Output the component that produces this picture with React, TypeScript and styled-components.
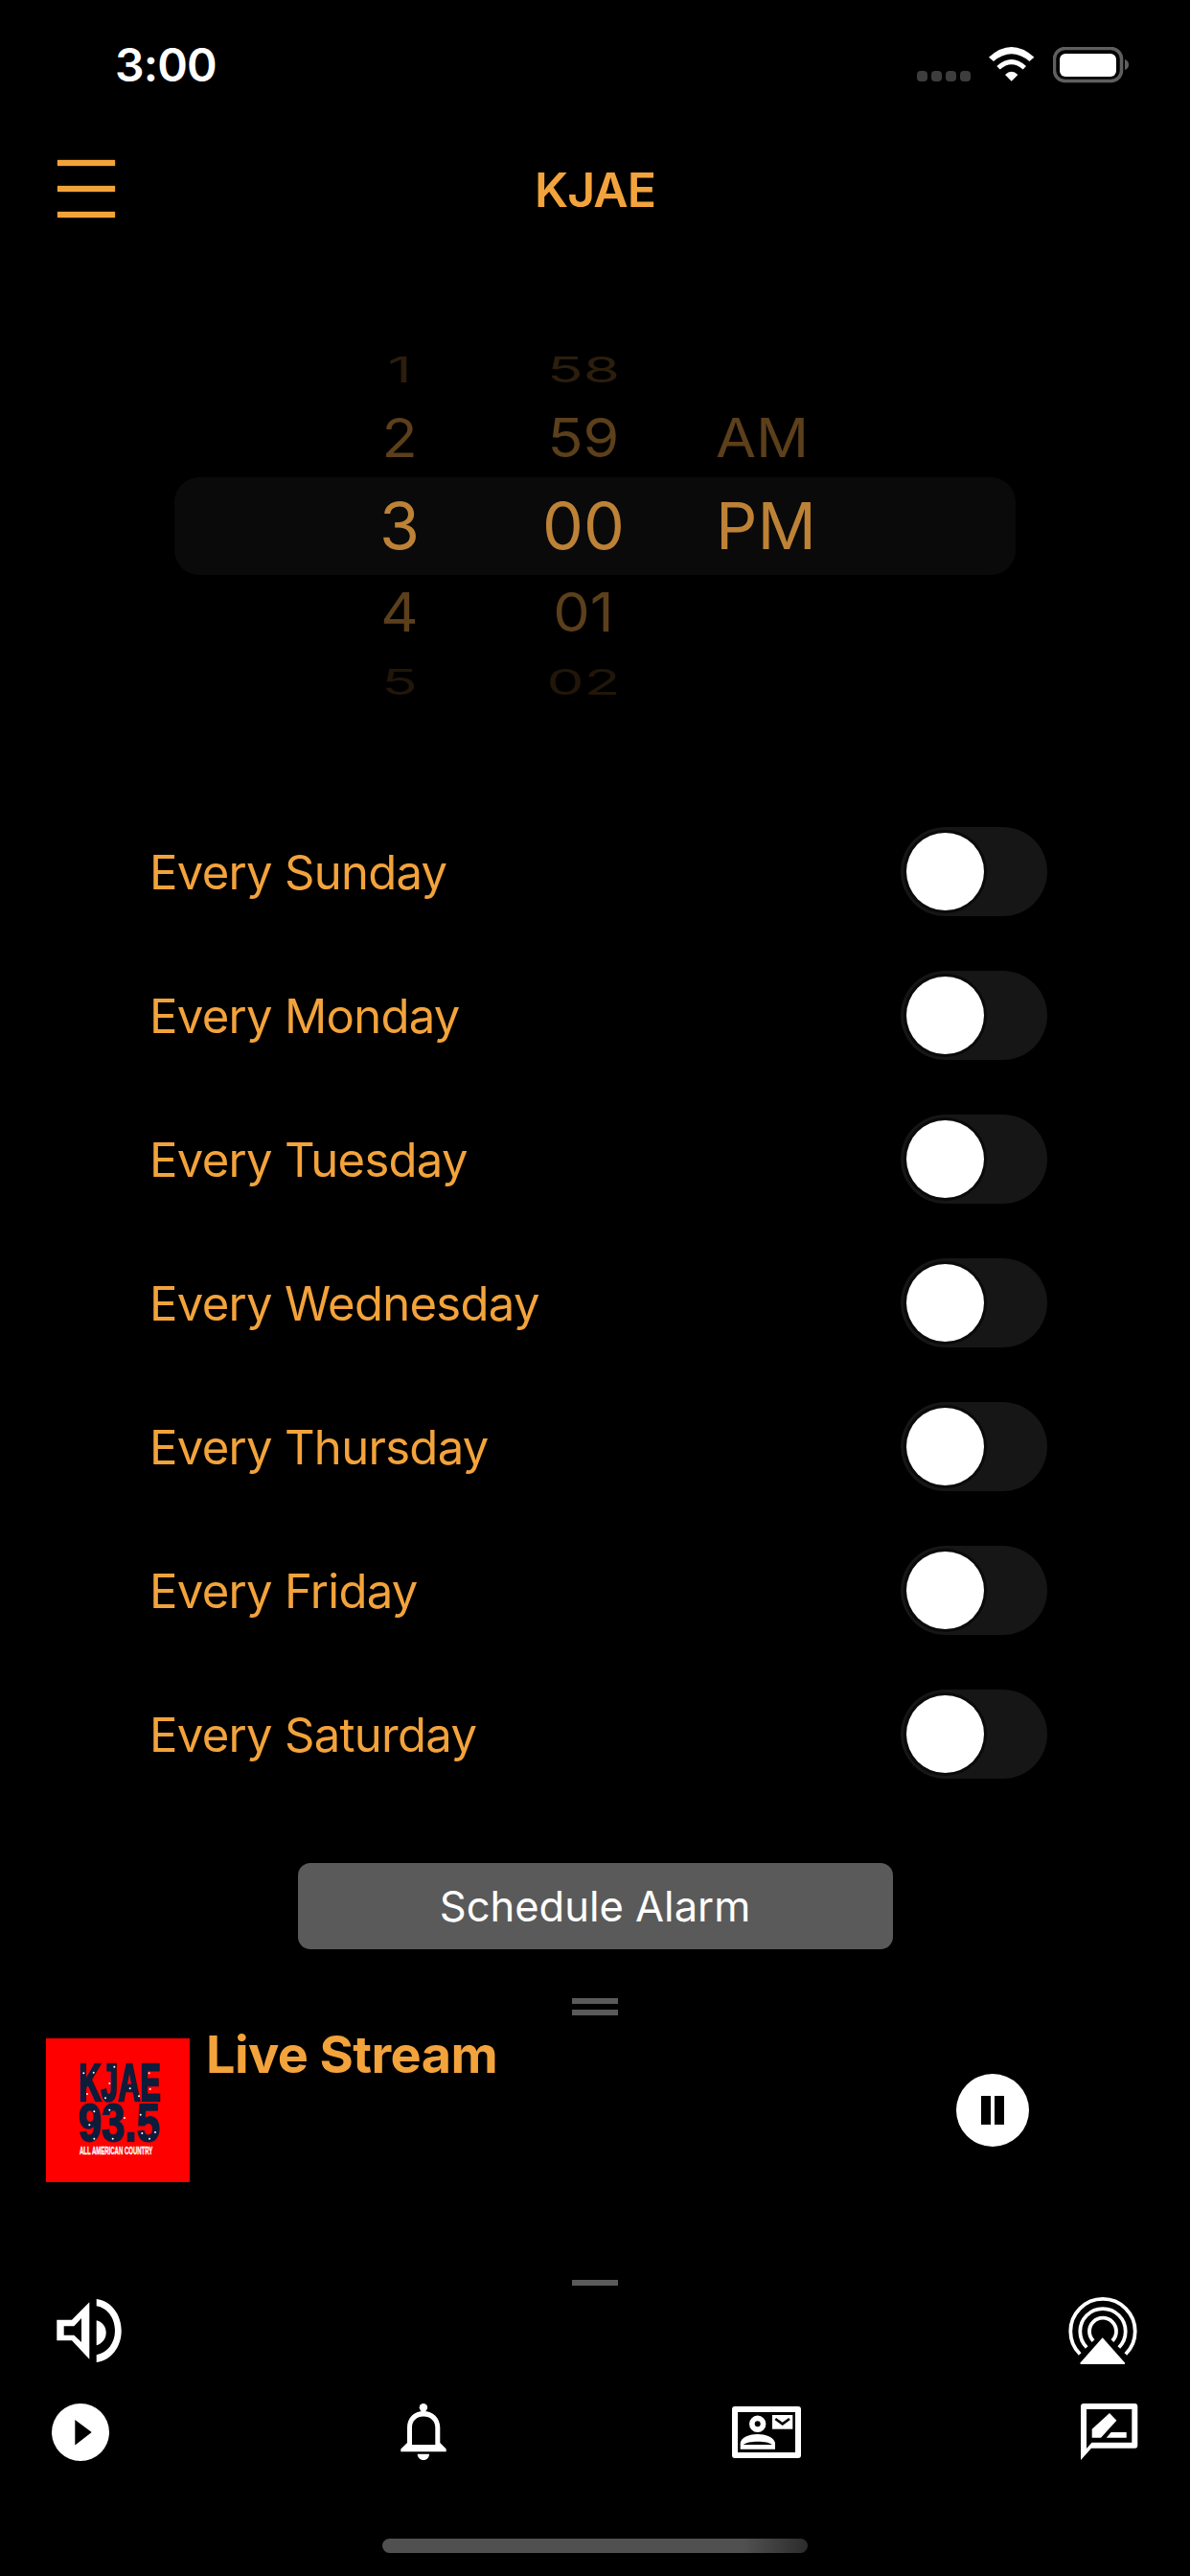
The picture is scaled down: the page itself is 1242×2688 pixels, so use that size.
import React from "react";
import styled, { createGlobalStyle } from "styled-components";

const ORANGE = "#f3a33b";

const GlobalStyle = createGlobalStyle`
  html, body {
    margin: 0;
    padding: 0;
    background: #000000;
  }
  * {
    box-sizing: border-box;
  }
`;

const Screen = styled.div`
  width: 1242px;
  height: 2688px;
  background: #000000;
  font-family: Inter, "Liberation Sans", sans-serif;
  display: flex;
  flex-direction: column;
  overflow: hidden;
`;

const StatusBar = styled.div`
  height: 140px;
  padding: 49px 63px 0 120px;
  display: flex;
  justify-content: space-between;
  align-items: flex-start;
`;

const Clock = styled.span`
  color: #ffffff;
  font-size: 48px;
  font-weight: 600;
  line-height: 37px;
  letter-spacing: -0.8px;
`;

const StatusIcons = styled.div`
  display: flex;
  align-items: flex-start;
  gap: 19px;
`;

const SignalDots = styled.div`
  display: flex;
  gap: 4px;
  margin-top: 25px;
`;

const SignalDot = styled.span`
  width: 11px;
  height: 11px;
  border-radius: 4px;
  background: #3d3d3d;
`;

const Header = styled.header`
  height: 110px;
  padding-top: 5px;
  position: relative;
  display: flex;
  align-items: center;
  justify-content: center;
`;

const Title = styled.h1`
  margin: 0;
  color: ${ORANGE};
  font-size: 50px;
  font-weight: 600;
  letter-spacing: -1px;
`;

const MenuButton = styled.div`
  position: absolute;
  left: 60px;
  top: 27px;
  width: 60px;
  display: flex;
  flex-direction: column;
  gap: 21px;
`;

const MenuBar = styled.span`
  height: 6px;
  background: ${ORANGE};
  box-shadow: 0 0 2px rgba(243, 163, 59, 0.6);
`;

const Picker = styled.div`
  position: relative;
  margin-top: 100px;
  padding-left: 367px;
  height: 401px;
  display: grid;
  grid-template-columns: 100px 100px 120px;
  column-gap: 92px;
`;

const PickerBand = styled.div`
  position: absolute;
  left: 182px;
  top: 148px;
  width: 878px;
  height: 102px;
  border-radius: 26px;
  background: #0a0a0a;
`;

const Wheel = styled.div<{ $align: string; $shift?: number }>`
  position: relative;
  display: flex;
  flex-direction: column;
  text-align: ${(p) => p.$align};
  margin-left: ${(p) => p.$shift ?? 0}px;
`;

const levelStyles = [
  { height: 109, size: 68, scale: 1, color: "#bd8236" },
  { height: 73, size: 61, scale: 0.93, color: "#5c3f1b" },
  { height: 71, size: 62, scale: 0.6, color: "#2c1e0d" },
];

const WheelItem = styled.div<{ $level: number; $dim?: boolean }>`
  height: ${(p) => levelStyles[p.$level].height}px;
  line-height: ${(p) => levelStyles[p.$level].height}px;
  font-size: ${(p) => levelStyles[p.$level].size}px;
  color: ${(p) => (p.$dim ? "#211609" : levelStyles[p.$level].color)};
  transform: scaleY(${(p) => levelStyles[p.$level].scale});
  font-weight: 400;
`;

const DayList = styled.div`
  margin-top: 112px;
  padding: 0 149px 0 156px;
  display: flex;
  flex-direction: column;
  gap: 57px;
`;

const DayRow = styled.div`
  height: 93px;
  display: flex;
  align-items: center;
  justify-content: space-between;
`;

const DayLabel = styled.span`
  color: ${ORANGE};
  font-size: 49px;
  font-weight: 400;
  letter-spacing: -0.7px;
  padding-top: 2px;
`;

const SwitchTrack = styled.div`
  position: relative;
  width: 153px;
  height: 93px;
  border-radius: 47px;
  background: #161616;
`;

const SwitchKnob = styled.span`
  position: absolute;
  left: 6px;
  top: 6px;
  width: 81px;
  height: 81px;
  border-radius: 50%;
  background: #ffffff;
  box-shadow: 0 0 0 3px #0a0a0a;
`;

const ScheduleButton = styled.button`
  align-self: center;
  margin-top: 88px;
  width: 621px;
  height: 90px;
  border: none;
  border-radius: 13px;
  background: #5a5a5a;
  color: #ffffff;
  font-family: inherit;
  font-size: 43.5px;
  font-weight: 400;
`;

const Handle = styled.div<{ $double?: boolean; $top: number }>`
  align-self: center;
  margin-top: ${(p) => p.$top}px;
  width: 48px;
  height: 6px;
  background: #5a5a5a;
  box-shadow: ${(p) => (p.$double ? "0 12px 0 #5a5a5a" : "none")};
`;

const PlayerRow = styled.div`
  margin-top: 36px;
  padding: 0 168px 0 48px;
  display: flex;
  align-items: center;
`;

const Logo = styled.svg`
  width: 150px;
  height: 150px;
  flex-shrink: 0;
`;

const TrackTitle = styled.div`
  flex: 1;
  align-self: flex-start;
  margin-left: 17px;
  margin-top: -15px;
  color: ${ORANGE};
  font-size: 54px;
  font-weight: 700;
  line-height: 64px;
  letter-spacing: -0.6px;
`;

const PauseButton = styled.div`
  width: 76px;
  height: 76px;
  border-radius: 50%;
  background: #ffffff;
  display: flex;
  align-items: center;
  justify-content: center;
  gap: 4px;
`;

const PauseBar = styled.span`
  width: 10px;
  height: 30px;
  background: #000000;
`;

const ControlsRow = styled.div`
  margin-top: 12px;
  height: 70px;
  padding: 0 54px 0 59px;
  display: flex;
  align-items: center;
  justify-content: space-between;
`;

const TabBar = styled.nav`
  margin-top: 41px;
  padding-left: 54px;
  height: 60px;
  display: grid;
  grid-template-columns: 364px 346px 364px 60px;
  align-items: center;
`;

const Icon = styled.svg`
  display: block;
  fill: #ffffff;
`;

const HomeBar = styled.div`
  align-self: center;
  margin-top: 81px;
  width: 444px;
  height: 15px;
  border-radius: 8px;
  background: linear-gradient(90deg, #505050 0%, #505050 85%, #2c2c2c 100%);
`;

const DAYS = [
  "Every Sunday",
  "Every Monday",
  "Every Tuesday",
  "Every Wednesday",
  "Every Thursday",
  "Every Friday",
  "Every Saturday",
];

const STARS = [
  [49.7, 35.7], [39.3, 36.3], [43, 58], [66.3, 47], [71.3, 29.7], [62, 62.3], [87.7, 52.3],
  [107.7, 36.3], [97, 60.3], [108.7, 53], [50.3, 76.3], [66.3, 74.7], [69.7, 104.7],
  [50.3, 104.7], [100.3, 99], [108, 104.7], [114, 98], [98.7, 79.7], [45.3, 90.3], [82, 83],
];

const WifiIcon = () => (
  <Icon width="48" height="36" viewBox="0 0 48 36">
    <path d="M0 10.7Q23.7 -10.7 47.4 10.7L42.4 15Q23.7 -0.4 5 15Z" />
    <path d="M8.3 20Q23.7 6 39 20L35.7 23.5Q23.7 13.1 11.7 23.5Z" />
    <path d="M17 29Q23.7 22.5 30.4 29L23.7 35.7Z" />
  </Icon>
);

const BatteryIcon = () => (
  <svg width="80" height="38" viewBox="0 0 80 38" style={{ display: "block" }}>
    <rect x="1.5" y="1.5" width="70" height="34" rx="11" fill="none" stroke="#5f5f5f" strokeWidth="3.5" />
    <rect x="7" y="7" width="59" height="24" rx="6" fill="#ffffff" />
    <path d="M75 13C78 14 79 16 79 18.5C79 21 78 23 75 24Z" fill="#5f5f5f" />
  </svg>
);

const SpeakerIcon = () => (
  <Icon width="68" height="66" viewBox="0 0 68 66">
    <path
      fillRule="evenodd"
      d="M0.3 21.7H16L34.3 3.3V62.7L16 43.3H0.3ZM7.7 28.3V37.7H18.3L26 45V20L18.3 28.3Z"
    />
    <path d="M41.7 22.3C48 24 51.7 29 51.7 35.3C51.7 41 48 46.5 41.7 48.3Z" />
    <path d="M41.7 0C57 2 67.7 16 67.7 33C67.7 50 57 64 41.7 66V58.3C53 56 61 46 61 33C61 20 53 9 41.7 7.3Z" />
  </Icon>
);

const AirplayIcon = () => (
  <svg width="74" height="71" viewBox="0 0 74 71" style={{ display: "block" }}>
    <g fill="none" stroke="#ffffff" strokeWidth="3.8">
      <path d="M13.2 59.5A33.7 33.7 0 1 1 60.8 59.5" />
      <path d="M20.2 52.5A23.7 23.7 0 1 1 53.8 52.5" />
      <path d="M27.1 45.6A14 14 0 1 1 46.9 45.6" />
    </g>
    <path d="M36.7 42.3L60 68.5Q60.5 70 59 70H14.5Q13 70 13.5 68.5Z" fill="#ffffff" />
  </svg>
);

const PlayIcon = () => (
  <Icon width="60" height="60" viewBox="0 0 60 60">
    <path fillRule="evenodd" d="M30 0A30 30 0 1 1 30 60A30 30 0 1 1 30 0ZM24.3 17V43.5L41.7 30Z" />
  </Icon>
);

const BellIcon = () => (
  <Icon width="48" height="60" viewBox="0 0 48 60">
    <circle cx="23.9" cy="4.3" r="4.2" />
    <path
      fillRule="evenodd"
      d="M0.3 50.3V47.5L7 41V25C7 15 14 8 24 8C34 8 41.3 15 41.3 25V41L47.7 47.5V50.3ZM12 43H36.3V25C36.3 18 31 13.5 24 13.5C17 13.5 12 18 12 25Z"
    />
    <path d="M17.7 52.7H30C30 56 27.5 59 24 59C20.5 59 17.7 56 17.7 52.7Z" />
  </Icon>
);

const ContactIcon = () => (
  <Icon width="72" height="54" viewBox="0 0 72 54">
    <path
      fillRule="evenodd"
      d="M3 0H69Q72 0 72 3V51Q72 54 69 54H3Q0 54 0 51V3Q0 0 3 0ZM6 6V48H66V6Z"
    />
    <path fillRule="evenodd" d="M26.7 9.6A8.7 8.7 0 1 1 26.7 27A8.7 8.7 0 1 1 26.7 9.6ZM26.7 15.3A3 3 0 1 0 26.7 21.3A3 3 0 1 0 26.7 15.3Z" />
    <path
      fillRule="evenodd"
      d="M8.7 44.7V38C10 32.5 17 29 26.7 29C36.5 29 43.5 32.5 45 38V44.7ZM12 40H41.7C38 35.5 16 35.5 12 40Z"
    />
    <path d="M42 9H63.3V23.7H42Z" />
    <path d="M45.3 13L52.7 18.3L60 13" fill="none" stroke="#000000" strokeWidth="2.6" />
  </Icon>
);

const FeedbackIcon = () => (
  <Icon width="60" height="60" viewBox="0 0 60 60">
    <path
      fillRule="evenodd"
      d="M3 0H56.3Q59.3 0 59.3 3V43.7Q59.3 46.7 56.3 46.7H11L0 59V3Q0 0 3 0ZM6 6V47L11.5 40.7H53.3V6Z"
    />
    <path d="M11.7 26.7L30 10L37.4 17.7L21 35.7H11.7Z" />
    <path d="M26.7 35.7H47.7V30H31.7Z" />
  </Icon>
);

const StationLogo = () => (
  <Logo viewBox="0 0 150 150">
    <rect width="150" height="150" fill="#ff0000" />
    <g
      fill="#0e1c3c"
      stroke="#0e1c3c"
      strokeWidth="1.5"
      fontFamily="Liberation Sans, sans-serif"
      fontWeight="700"
    >
      <text transform="translate(34 65) scale(1 1.72)" fontSize="32">
        KJAE
      </text>
      <text transform="translate(34 107) scale(1 1.27)" fontSize="43.7">
        93.5
      </text>
    </g>
    <g fill="#ffffff">
      {STARS.map(([x, y]) => (
        <circle key={`${x}-${y}`} cx={x} cy={y} r="1" />
      ))}
    </g>
    <text
      transform="translate(35 120.5) scale(1 1.85)"
      fill="#ffffff"
      stroke="#ffffff"
      strokeWidth="0.2"
      fontFamily="Liberation Sans, sans-serif"
      fontWeight="700"
      fontSize="6"
    >
      ALL AMERICAN COUNTRY
    </text>
  </Logo>
);

const App: React.FC = () => {
  return (
    <Screen>
      <GlobalStyle />
      <StatusBar>
        <Clock>3:00</Clock>
        <StatusIcons>
          <SignalDots>
            <SignalDot />
            <SignalDot />
            <SignalDot />
            <SignalDot />
          </SignalDots>
          <WifiIcon />
          <BatteryIcon />
        </StatusIcons>
      </StatusBar>

      <Header>
        <MenuButton>
          <MenuBar />
          <MenuBar />
          <MenuBar />
        </MenuButton>
        <Title>KJAE</Title>
      </Header>

      <Picker>
        <PickerBand />
        <Wheel $align="center">
          <WheelItem $level={2}>1</WheelItem>
          <WheelItem $level={1}>2</WheelItem>
          <WheelItem $level={0}>3</WheelItem>
          <WheelItem $level={1}>4</WheelItem>
          <WheelItem $level={2} $dim>
            5
          </WheelItem>
        </Wheel>
        <Wheel $align="center">
          <WheelItem $level={2}>58</WheelItem>
          <WheelItem $level={1}>59</WheelItem>
          <WheelItem $level={0}>00</WheelItem>
          <WheelItem $level={1}>01</WheelItem>
          <WheelItem $level={2} $dim>
            02
          </WheelItem>
        </Wheel>
        <Wheel $align="left" $shift={-4}>
          <WheelItem $level={2} />
          <WheelItem $level={1}>AM</WheelItem>
          <WheelItem $level={0}>PM</WheelItem>
        </Wheel>
      </Picker>

      <DayList>
        {DAYS.map((day) => (
          <DayRow key={day}>
            <DayLabel>{day}</DayLabel>
            <SwitchTrack>
              <SwitchKnob />
            </SwitchTrack>
          </DayRow>
        ))}
      </DayList>

      <ScheduleButton>Schedule Alarm</ScheduleButton>

      <Handle $double $top={51} />

      <PlayerRow>
        <StationLogo />
        <TrackTitle>Live Stream</TrackTitle>
        <PauseButton>
          <PauseBar />
          <PauseBar />
        </PauseButton>
      </PlayerRow>

      <Handle $top={102} />

      <ControlsRow>
        <SpeakerIcon />
        <AirplayIcon />
      </ControlsRow>

      <TabBar>
        <PlayIcon />
        <BellIcon />
        <ContactIcon />
        <FeedbackIcon />
      </TabBar>

      <HomeBar />
    </Screen>
  );
};

export default App;
